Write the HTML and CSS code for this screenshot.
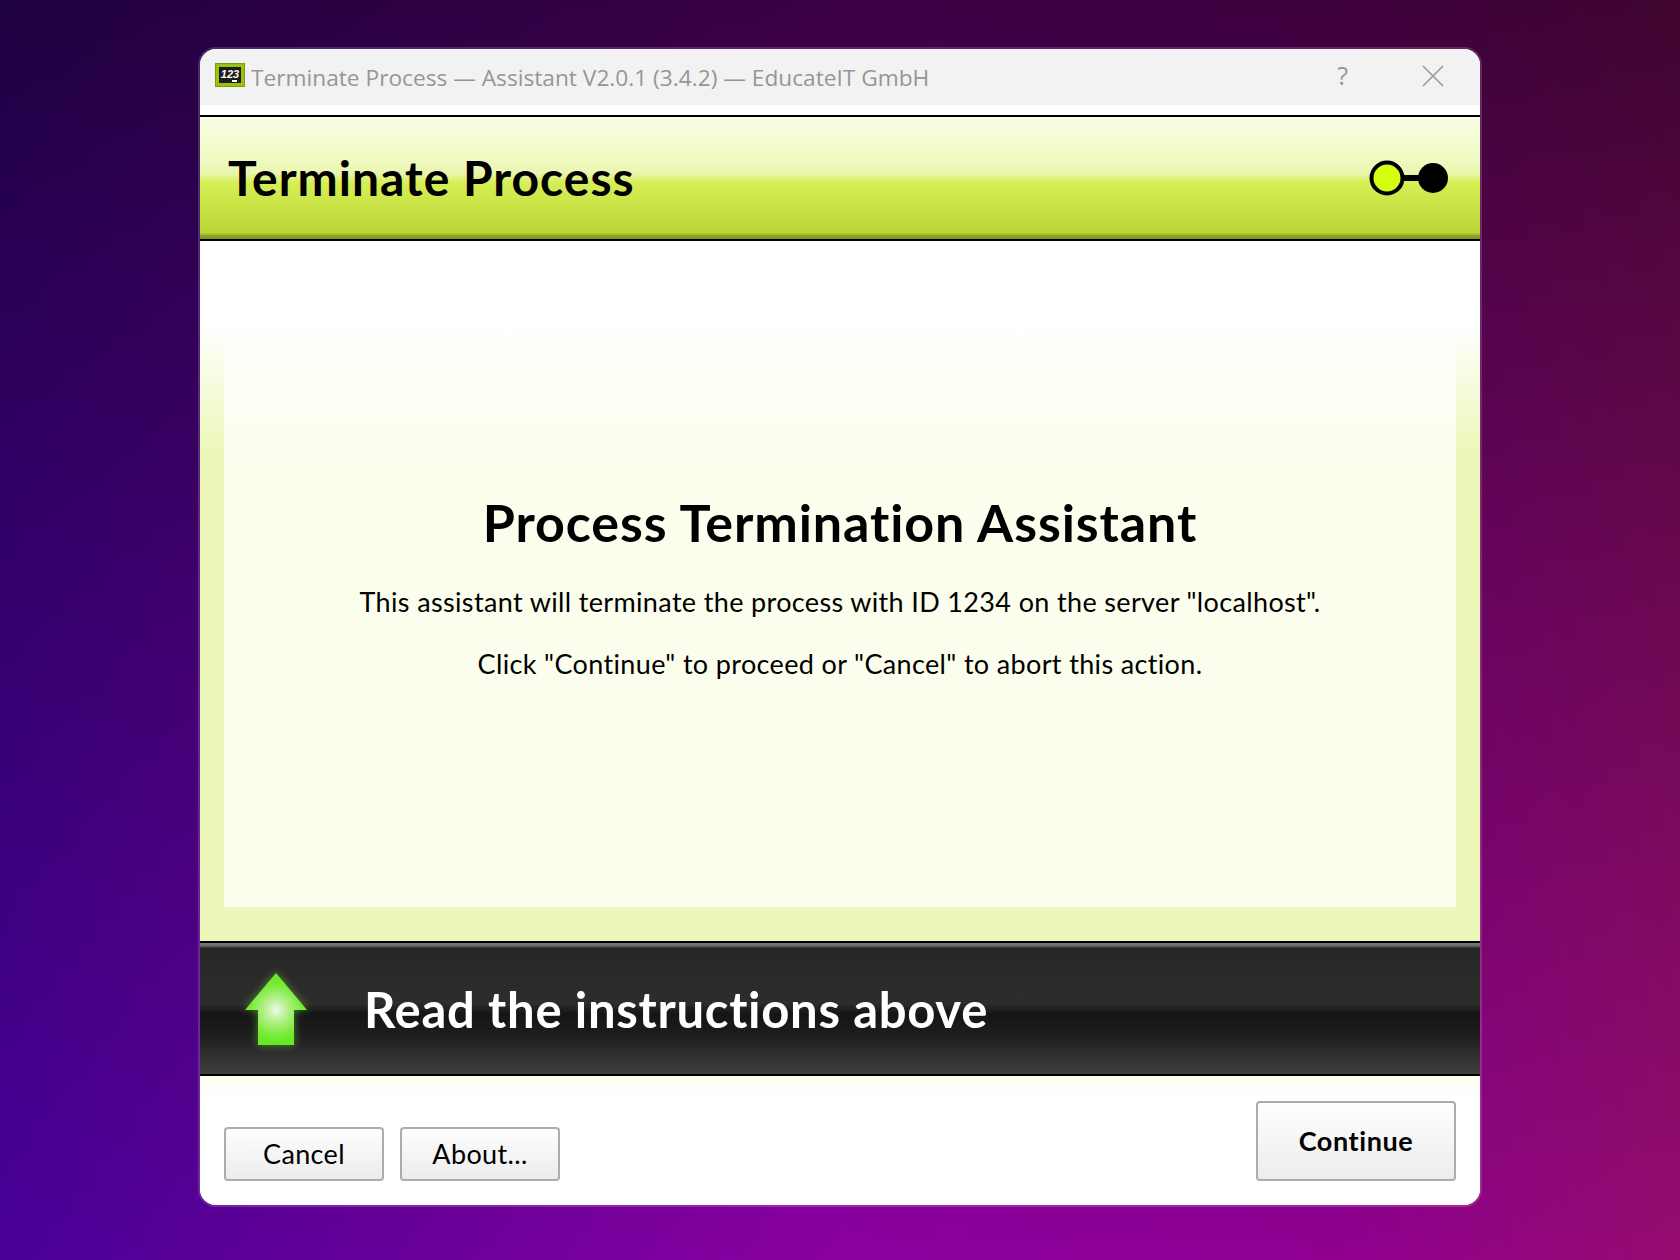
FILE: index.html
```html
<!DOCTYPE html>
<html lang="en">

<head>
    <meta charset="UTF-8">
    <title>Terminate Process</title>
    <link rel="stylesheet" href="styles.css">
</head>

<body>
    <div class="window">
        <div class="titlebar">
            <svg class="app-icon" width="30" height="24" viewBox="0 0 30 24">
                <rect x="0.5" y="0.5" width="29" height="23" fill="#9ac20e" stroke="#7c9c0a"/>
                <rect x="4" y="4" width="22" height="16" fill="#1c1c1c"/>
                <text x="15" y="15" class="app-icon-text">123</text>
                <rect x="17" y="17" width="5" height="2" fill="#fff"/>
            </svg>
            <span class="window-title">Terminate Process — Assistant V2.0.1 (3.4.2) — EducateIT GmbH</span>
            <span class="help">?</span>
            <svg class="close" width="22" height="22" viewBox="0 0 22 22">
                <path d="M1 1 L21 21 M21 1 L1 21" stroke="#999" stroke-width="1.6" fill="none"/>
            </svg>
        </div>
        <header class="banner">
            <h1>Terminate Process</h1>
            <svg class="steps" width="80" height="38" viewBox="0 0 80 38">
                <rect x="30" y="16" width="26" height="6" fill="#000"/>
                <circle cx="19" cy="19" r="15.5" fill="#d4ff12" stroke="#000" stroke-width="4"/>
                <circle cx="65" cy="19" r="15" fill="#000"/>
            </svg>
        </header>
        <main class="content">
            <div class="panel">
                <h2>Process Termination Assistant</h2>
                <p>This assistant will terminate the process with ID 1234 on the server "localhost".</p>
                <p>Click "Continue" to proceed or "Cancel" to abort this action.</p>
            </div>
        </main>
        <div class="hint">
            <svg class="arrow" width="90" height="100" viewBox="0 0 90 100">
                <defs>
                    <radialGradient id="arrowFill" gradientUnits="userSpaceOnUse" cx="45" cy="47" r="34">
                        <stop offset="0" stop-color="#eef8e8"/>
                        <stop offset="0.35" stop-color="#b4f08a"/>
                        <stop offset="0.75" stop-color="#78ec38"/>
                        <stop offset="1" stop-color="#66e826"/>
                    </radialGradient>
                    <filter id="arrowGlow" x="-40%" y="-40%" width="180%" height="180%">
                        <feGaussianBlur stdDeviation="4"/>
                    </filter>
                </defs>
                <path d="M45 10 L76 47 L63 47 L63 82 L27 82 L27 47 L14 47 Z" fill="#7ff03a" opacity="0.5" filter="url(#arrowGlow)"/>
                <path d="M45 10 L76 47 L63 47 L63 82 L27 82 L27 47 L14 47 Z" fill="url(#arrowFill)"/>
            </svg>
            <span class="hint-text">Read the instructions above</span>
        </div>
        <footer class="actions">
            <button class="btn" type="button">Cancel</button>
            <button class="btn" type="button">About...</button>
            <button class="btn btn-primary" type="button">Continue</button>
        </footer>
    </div>
</body>

</html>
```

FILE: styles.css
```css
html,
body {
    height: 100%;
}

body {
    margin: 0;
    font-family: Lato, "Open Sans", sans-serif;
    color: #000;
    background-image:
        linear-gradient(180deg, #6c6c6c 0%, #bcbcbc 50%, #fff 100%),
        linear-gradient(90deg, #480098 0%, #5c0098 15%, #8a00a0 50%, #8f0090 80%, #950c70 100%);
    background-blend-mode: multiply;
    overflow: hidden;
}

.window {
    box-sizing: border-box;
    width: 1284px;
    height: 1160px;
    margin: 47px auto 0;
    border: 2px solid rgba(255, 255, 255, 0.16);
    border-radius: 18px;
    background: #fff;
    display: flex;
    flex-direction: column;
    overflow: hidden;
    background-clip: padding-box;
}

.titlebar {
    height: 56px;
    flex: none;
    display: flex;
    align-items: center;
    padding-left: 15px;
    background: #f2f2f2;
    color: #969696;
}

.app-icon {
    margin-right: 6px;
    margin-top: -4px;
}

.app-icon-text {
    font-family: "Liberation Sans", sans-serif;
    font-size: 11px;
    font-weight: bold;
    font-style: italic;
    fill: #fff;
    text-anchor: middle;
}

.window-title {
    font-family: "Open Sans", sans-serif;
    font-size: 22.7px;
    flex: 1;
}

.help {
    font-family: "Open Sans", sans-serif;
    font-size: 25px;
    margin-right: 74px;
    margin-top: -4px;
}

.close {
    margin-right: 36px;
    margin-top: -3px;
}

.banner {
    flex: none;
    box-sizing: border-box;
    height: 126px;
    margin-top: 10px;
    border-top: 2px solid #000;
    border-bottom: 2px solid #000;
    padding: 0 32px 0 28px;
    display: flex;
    align-items: center;
    justify-content: space-between;
    background: linear-gradient(180deg, #fbfde6 0%, #eef8bc 38%, #e9f6ae 46%, #d6ee55 54%, #c8e244 75%, #b8d535 95%, #8fa52a 97%, #7e9424 100%);
}

.banner h1 {
    margin: 0 0 2px;
    font-size: 48px;
    font-weight: 700;
    letter-spacing: 1px;
}

.content {
    flex: 1;
    display: flex;
    padding: 0 24px 34px;
    background: linear-gradient(180deg, #fff 0%, #fff 12%, #ecf7b9 30%, #ecf7b9 100%);
}

.panel {
    flex: 1;
    display: flex;
    flex-direction: column;
    align-items: center;
    padding-top: 250px;
    background: linear-gradient(180deg, #fff 0%, #fff 10%, #fbfeec 35%, #fbfeec 100%);
}

.panel h2 {
    margin: 0 0 32px;
    font-size: 52px;
    font-weight: 700;
    letter-spacing: 0.9px;
}

.panel p {
    margin: 0 0 29px;
    font-size: 27px;
    letter-spacing: 0.35px;
}

.hint {
    flex: none;
    box-sizing: border-box;
    height: 135px;
    display: flex;
    align-items: center;
    border-top: 2px solid #000;
    border-bottom: 2px solid #000;
    padding-left: 31px;
    background: linear-gradient(180deg, #777 0%, #6a6a6a 2%, #262626 4%, #2d2d2d 46%, #151515 54%, #1d1d1d 70%, #404040 100%);
}

.arrow {
    margin-top: 8px;
}

.hint-text {
    margin-left: 43px;
    color: #fff;
    font-size: 49px;
    font-weight: 700;
    letter-spacing: 0.7px;
}

.actions {
    flex: none;
    height: 129px;
    box-sizing: border-box;
    display: flex;
    align-items: flex-end;
    gap: 16px;
    padding: 0 24px 24px;
    background: linear-gradient(180deg, #fdfdf0 0%, #fff 16%);
}

.btn {
    box-sizing: border-box;
    width: 160px;
    height: 54px;
    border: 2px solid #acacac;
    border-radius: 4px;
    background: linear-gradient(180deg, #fefefe 0%, #ececec 100%);
    font-family: inherit;
    font-size: 27px;
    letter-spacing: 0.35px;
    color: #000;
    padding: 0 0 2px;
}

.btn-primary {
    width: 200px;
    height: 80px;
    margin-left: auto;
    font-weight: 700;
    letter-spacing: 0.6px;
}
```
